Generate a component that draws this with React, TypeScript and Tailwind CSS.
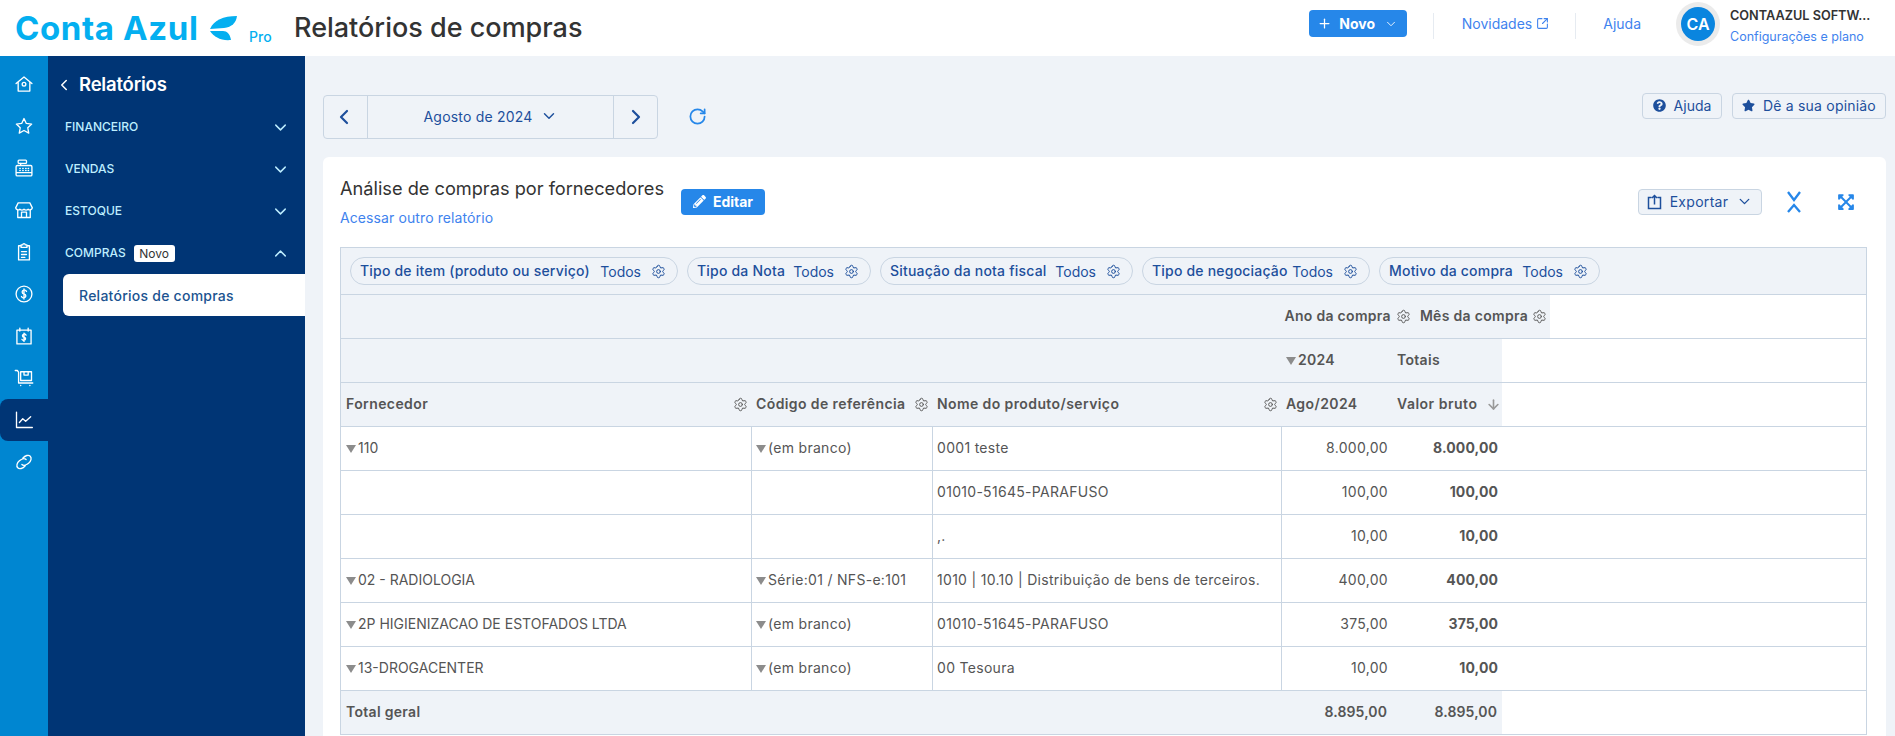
import { ArrowDown, ChevronDown, ChevronLeft, ChevronRight, ChevronUp, Plus, RotateCw, Settings, SquareArrowOutUpRight } from 'lucide-react';
import { FaExpandArrowsAlt, FaPencilAlt, FaQuestionCircle, FaStar } from 'react-icons/fa';
import type { ReactNode } from 'react';

const FILTERS = [
  { label: 'Tipo de item (produto ou serviço)', width: 'w-[328px]' },
  { label: 'Tipo da Nota', width: 'w-[184px]' },
  { label: 'Situação da nota fiscal', width: 'w-[253px]' },
  { label: 'Tipo de negociação', width: 'w-[228px]' },
  { label: 'Motivo da compra', width: 'w-[221px]' },
];

const ROWS = [
  { a: '110', b: '(em branco)', c: '0001 teste', v: '8.000,00' },
  { a: '', b: '', c: '01010-51645-PARAFUSO', v: '100,00' },
  { a: '', b: '', c: ',.', v: '10,00' },
  { a: '02 - RADIOLOGIA', b: 'Série:01 / NFS-e:101', c: '1010 | 10.10 | Distribuição de bens de terceiros.', v: '400,00' },
  { a: '2P HIGIENIZACAO DE ESTOFADOS LTDA', b: '(em branco)', c: '01010-51645-PARAFUSO', v: '375,00' },
  { a: '13-DROGACENTER', b: '(em branco)', c: '00 Tesoura', v: '10,00' },
];

const MENU = ['FINANCEIRO', 'VENDAS', 'ESTOQUE'];

function RailIcon({ children }: { children: ReactNode }) {
  return (
    <svg width="20" height="20" viewBox="0 0 24 24" fill="none" stroke="currentColor" strokeWidth="1.6" strokeLinecap="round" strokeLinejoin="round">
      {children}
    </svg>
  );
}

const RAIL: ReactNode[] = [
  <RailIcon key="home"><path d="M2.5 11.5 12 3.5l9.5 8M5 10v10.5h14V10" /><rect x="9.8" y="10" width="4.4" height="4.4" rx="2.2" /></RailIcon>,
  <RailIcon key="star"><path d="m12 3 2.8 5.9 6.4.8-4.7 4.4 1.2 6.4L12 17.4l-5.7 3.1 1.2-6.4-4.7-4.4 6.4-.8z" /></RailIcon>,
  <RailIcon key="register"><rect x="5" y="2.5" width="10" height="4" rx="1" /><path d="M4 9h16a1.5 1.5 0 0 1 1.5 1.5V20a1.5 1.5 0 0 1-1.5 1.5H4A1.5 1.5 0 0 1 2.5 20v-9.5A1.5 1.5 0 0 1 4 9zM2.5 17.5h19M7 12.5h.5M10.5 12.5h.5M14 12.5h.5M17 12.5h.5M7 15h.5M10.5 15h.5M14 15h.5M17 15h.5M8 6.500V9" /></RailIcon>,
  <RailIcon key="store"><path d="M5 3.500h14l3 6a3 3 0 0 1-5 1.500 3.500 3.500 0 0 1-5 0 3.500 3.500 0 0 1-5 0 3 3 0 0 1-5-1.500zM4.500 12v9h15v-9M9 21v-6.500h6V21" /></RailIcon>,
  <RailIcon key="clip"><path d="M8.500 4.500H5.500V21.500h13V4.500h-3M8.500 3.500h2a1.500 1.500 0 0 1 3 0h2v3h-7zM9 11.500h6M9 15h6M9 18.500h4" /></RailIcon>,
  <RailIcon key="money"><circle cx="12" cy="12" r="9.500" /><path d="M15 9a2.500 2.500 0 0 0-3-1.500c-3 .3-3 3.500 0 4.500s3 4.200 0 4.500A2.500 2.500 0 0 1 9 15M12 6v12" /></RailIcon>,
  <RailIcon key="calendar"><path d="M3.500 5h17v16.500h-17zM7 2.500V6M17 2.500V6M14.500 11a2 2 0 0 0-2.500-1c-2.500.2-2.500 2.800 0 3.500s2.500 3.300 0 3.500a2 2 0 0 1-2.500-1M12 8.500v10" /></RailIcon>,
  <RailIcon key="cart"><path d="M1.500 3h2.500l1.500 2v13h17" /><rect x="8" y="4.500" width="13" height="10.500" /><path d="M12 4.500v4h5v-4M8 21h.1M19 21h.1" /></RailIcon>,
  <RailIcon key="chart"><path d="M3 2.500v18.500h19M6.500 15l4-4.500 3.500 3 6-5.500" /></RailIcon>,
  <RailIcon key="link"><path d="M10.500 7.500c3-3.500 7-4.500 9-2.500s1 6-2 8.500-6.500 3-8 1.500M13.500 16.500c-3 3.500-7 4.500-9 2.500s-1-6 2-8.500 6.500-3 8-1.500" /></RailIcon>,
];

function Triangle() {
  return (
    <svg width="10" height="8" viewBox="0 0 10 8" className="shrink-0 text-[#8c8c8c]">
      <path d="M0 0h10L5 8z" fill="currentColor" />
    </svg>
  );
}

function Gear({ className = 'text-[#5c5c5c]' }: { className?: string }) {
  return <Settings size={15} strokeWidth={1.6} className={`shrink-0 ${className}`} />;
}

function Header() {
  return (
    <header className="h-14 shrink-0 bg-white flex items-center pl-[15px] pr-[10px]">
      <div className="w-[279px] flex items-center text-[#04aff0]">
        <span className="text-[33px] leading-none font-bold tracking-[0.6px] w-[194px] whitespace-nowrap">Conta Azul</span>
        <svg width="29" height="26" viewBox="0 0 29 26" fill="currentColor" className="shrink-0">
          <path d="M1 14C5 5 14 1 28 1c-1 7-5 11-13 12z" />
          <path d="M1 16h13c4 0 7 3 8 9-10 1-17-3-21-9z" />
        </svg>
        <span className="text-[14px] font-medium ml-[11px] mt-[16px]">Pro</span>
      </div>
      <h1 className="text-[27px] font-medium text-[#333] whitespace-nowrap">Relatórios de compras</h1>
      <div className="ml-auto flex items-center">
        <div className="flex items-center pb-[9px]">
          <button className="w-[98px] h-[27px] rounded bg-[#2687e9] text-white flex items-center justify-center gap-[7px] text-[14px] font-bold">
            <Plus size={15} strokeWidth={2} />
            Novo
            <ChevronDown size={14} strokeWidth={1.5} className="ml-[2px]" />
          </button>
          <div className="w-px h-[26px] bg-[#e6ebf1] ml-[26px] mt-[5px]" />
          <a className="ml-[28px] text-[14px] text-[#3f83ee] flex items-center gap-[4px]">
            Novidades
            <SquareArrowOutUpRight size={13} strokeWidth={2} />
          </a>
          <div className="w-px h-[26px] bg-[#e6ebf1] ml-[26px] mt-[5px]" />
          <a className="ml-[27px] text-[14px] text-[#3f83ee]">Ajuda</a>
        </div>
        <div className="ml-[35px] mb-[9px] w-[44px] h-[44px] rounded-full bg-[#ebebeb] flex items-center justify-center">
          <div className="w-[34px] h-[34px] rounded-full bg-[#0a85df] text-white text-[16px] font-semibold flex items-center justify-center">CA</div>
        </div>
        <div className="ml-[10px] mb-[4px] w-[155px] flex flex-col gap-[5px]">
          <span className="text-[12.7px] leading-4 font-semibold text-[#333] whitespace-nowrap">CONTAAZUL SOFTW...</span>
          <span className="text-[12.5px] leading-4 text-[#3f83ee] whitespace-nowrap">Configurações e plano</span>
        </div>
      </div>
    </header>
  );
}

function Sidebar() {
  return (
    <>
      <nav className="w-12 shrink-0 bg-[#0086d1] text-white pt-[7px] flex flex-col">
        {RAIL.map((icon, i) => (
          <div key={i} className={`h-[42px] flex items-center justify-center ${i === 8 ? 'bg-[#003575] rounded-l-lg' : ''}`}>
            {icon}
          </div>
        ))}
      </nav>
      <aside className="w-[257px] shrink-0 bg-[#003575] pt-2 flex flex-col">
        <div className="h-[42px] flex items-center pl-[7px] text-white">
          <ChevronLeft size={18} strokeWidth={2} />
          <span className="ml-[6px] text-[18.5px] font-semibold tracking-[-0.2px]">Relatórios</span>
        </div>
        {MENU.map((item) => (
          <div key={item} className="h-[42px] flex items-center justify-between pl-[17px] pr-[15px] text-[#bdeeff] text-[12px] font-medium">
            {item}
            <ChevronDown size={19} strokeWidth={1.8} />
          </div>
        ))}
        <div className="h-[42px] flex items-center pl-[17px] pr-[15px] text-[#bdeeff] text-[12px] font-medium">
          COMPRAS
          <span className="ml-[8px] h-[17px] w-[41px] rounded-[3px] bg-white text-[#333] text-[12px] leading-[17px] text-center font-normal">Novo</span>
          <ChevronUp size={19} strokeWidth={1.8} className="ml-auto" />
        </div>
        <div className="ml-[15px] h-[42px] rounded-l-md bg-white flex items-center pl-4 text-[14px] tracking-[0.25px] font-medium text-[#1b5390] whitespace-nowrap">
          Relatórios de compras
        </div>
      </aside>
    </>
  );
}

function Toolbar() {
  return (
    <div className="flex items-start">
      <div className="w-[335px] h-11 flex border border-[#c9d5e2] rounded text-[#1d4f9c]">
        <div className="w-[44px] flex items-center justify-center border-r border-[#c9d5e2] pr-[3px]">
          <ChevronLeft size={24} strokeWidth={2.2} />
        </div>
        <div className="flex-1 flex items-center justify-center gap-[7px] text-[14px] tracking-[0.2px] pb-[2px]">
          Agosto de 2024
          <ChevronDown size={18} strokeWidth={1.9} />
        </div>
        <div className="w-[44px] flex items-center justify-center border-l border-[#c9d5e2] pl-[1px]">
          <ChevronRight size={24} strokeWidth={2.2} />
        </div>
      </div>
      <RotateCw size={19} strokeWidth={2.2} className="ml-[30px] mt-[12px] text-[#2687e9]" />
      <div className="ml-auto flex gap-[10px] text-[14px] text-[#1d4f9c] -mt-[2px]">
        <button className="h-[26px] w-[80px] rounded border border-[#c9d5e2] flex items-center justify-center gap-[8px] pb-[1px]">
          <FaQuestionCircle size={13} />
          Ajuda
        </button>
        <button className="h-[26px] w-[154px] rounded border border-[#c9d5e2] flex items-center justify-center gap-[8px] tracking-[0.2px] whitespace-nowrap pb-[1px]">
          <FaStar size={13} />
          Dê a sua opinião
        </button>
      </div>
    </div>
  );
}

function ReportTitle() {
  return (
    <div className="h-[90px] flex items-start">
      <div className="pt-[20px]">
        <h2 className="text-[18.2px] leading-[22px] text-[#333] whitespace-nowrap">Análise de compras por fornecedores</h2>
        <a className="block mt-[10px] text-[14px] tracking-[0.1px] leading-[18px] text-[#3f83ee]">Acessar outro relatório</a>
      </div>
      <button className="ml-[17px] mt-[32px] w-[84px] h-[26px] rounded bg-[#2687e9] text-white text-[14px] font-bold flex items-center justify-center gap-[7px] pb-[1px]">
        <FaPencilAlt size={13} />
        Editar
      </button>
      <div className="ml-auto mt-[32px] mr-[-19px] flex items-start">
        <button className="w-[124px] h-[26px] rounded border border-[#c9d5e2] bg-[#eff3f8] text-[14px] tracking-[0.3px] text-[#1d4f9c] flex items-center justify-center gap-[8px] pb-[1px]">
          <svg width="15" height="16" viewBox="0 0 15 16" fill="none" stroke="currentColor" strokeWidth="1.5">
            <path d="M4.500 3.500H1.500v11h12v-11h-3M7.500 10.500V1.500M5 4l2.500-2.500L10 4" />
          </svg>
          Exportar
          <ChevronDown size={17} strokeWidth={1.9} />
        </button>
        <svg width="16" height="22" viewBox="0 0 16 22" fill="none" stroke="#2687e9" strokeWidth="2.3" className="ml-[24px] mt-[2px]">
          <path d="m2 1 6 8 6-8M2 21l6-7 6 7" />
        </svg>
        <FaExpandArrowsAlt size={18} className="ml-[35px] mt-[4px] mr-[31px] text-[#2687e9]" />
      </div>
    </div>
  );
}

function HeaderCell({ width, label, gear = true }: { width: string; label: string; gear?: boolean }) {
  return (
    <div className={`${width} shrink-0 h-full flex items-center justify-between pl-[5px] pr-[3px] whitespace-nowrap`}>
      <span className="pb-[2px]">{label}</span>
      {gear && <Gear />}
    </div>
  );
}

function Table() {
  return (
    <div className="border border-b-0 border-[#c9d5e2] text-[14px] tracking-[0.3px] text-[#555]">
      <div className="h-[47px] bg-[#eff3f8] border-b border-[#c9d5e2] flex items-center gap-[9px] pl-[9px]">
        {FILTERS.map((f) => (
          <div key={f.label} className={`${f.width} h-[28px] shrink-0 rounded-full border border-[#c9d5e2] flex items-center pl-[9px] pr-[11px] text-[#1d4f9c] tracking-[0.2px] whitespace-nowrap`}>
            <span className="font-medium pb-[2px]">{f.label}</span>
            <span className="ml-auto mr-[10px] tracking-normal">Todos</span>
            <Gear className="text-[#1d4f9c]" />
          </div>
        ))}
      </div>

      <div className="h-11 border-b border-[#c9d5e2] flex font-semibold tracking-[0.3px]">
        <div className="w-[1209px] bg-[#eff3f8] flex items-center justify-end whitespace-nowrap">
          <span className="pb-[2px]">Ano da compra</span>
          <span className="ml-[5px]"><Gear /></span>
          <span className="ml-[9px] pb-[2px]">Mês da compra</span>
          <span className="ml-[4px] mr-[3px]"><Gear /></span>
        </div>
      </div>

      <div className="h-11 border-b border-[#c9d5e2] flex font-semibold">
        <div className="w-[1161px] bg-[#eff3f8] flex items-center pl-[945px]">
          <Triangle />
          <span className="ml-[2px] w-[99px] pb-[2px]">2024</span>
          <span className="pb-[2px]">Totais</span>
        </div>
      </div>

      <div className="h-11 border-b border-[#c9d5e2] flex font-semibold tracking-[0.4px]">
        <div className="w-[1161px] bg-[#eff3f8] flex items-center">
          <HeaderCell width="w-[410px]" label="Fornecedor" />
          <HeaderCell width="w-[181px]" label="Código de referência" />
          <HeaderCell width="w-[349px]" label="Nome do produto/serviço" />
          <div className="w-[110px] pl-[5px] pb-[2px]">Ago/2024</div>
          <div className="flex-1 flex items-center justify-between pl-[6px] pr-[1px] whitespace-nowrap">
            <span className="pb-[2px] tracking-[0.5px]">Valor bruto</span>
            <ArrowDown size={15} strokeWidth={2.6} className="text-[#999]" />
          </div>
        </div>
      </div>

      {ROWS.map((r, i) => (
        <div key={i} className="h-11 border-b border-[#c9d5e2] flex items-stretch">
          <div className="w-[411px] shrink-0 border-r border-[#c9d5e2] flex items-center gap-[2px] pl-[5px] tracking-normal whitespace-nowrap">
            {r.a && <Triangle />}
            <span className="pb-[2px]">{r.a}</span>
          </div>
          <div className="w-[181px] shrink-0 border-r border-[#c9d5e2] flex items-center gap-[2px] pl-[4px] whitespace-nowrap">
            {r.b && <Triangle />}
            <span className="pb-[2px]">{r.b}</span>
          </div>
          <div className="w-[349px] shrink-0 border-r border-[#c9d5e2] flex items-center pl-[4px] pb-[2px] whitespace-nowrap">{r.c}</div>
          <div className="w-[106px] shrink-0 flex items-center justify-end pb-[2px]">{r.v}</div>
          <div className="w-[110px] shrink-0 flex items-center justify-end font-bold tracking-[0.1px] pb-[2px]">{r.v}</div>
        </div>
      ))}

      <div className="h-11 border-b border-[#c9d5e2] flex font-semibold">
        <div className="w-[1161px] bg-[#eff3f8] flex items-center pl-[5px] pr-[5px] pb-[2px]">
          Total geral
          <span className="ml-auto tracking-[0.1px]">8.895,00</span>
          <span className="w-[110px] text-right tracking-[0.1px]">8.895,00</span>
        </div>
      </div>
    </div>
  );
}

export default function App() {
  return (
    <div className="h-[736px] overflow-hidden flex flex-col bg-[#eff3f8]" style={{ fontFamily: 'Inter, "Noto Sans", sans-serif' }}>
      <Header />
      <div className="flex-1 flex min-h-0">
        <Sidebar />
        <main className="flex-1 pt-[39px] pl-[18px] pr-[9px] min-w-0">
          <Toolbar />
          <section className="mt-[18px] bg-white rounded-t-md pl-[17px] pr-[19px] pb-8">
            <ReportTitle />
            <Table />
          </section>
        </main>
      </div>
    </div>
  );
}
